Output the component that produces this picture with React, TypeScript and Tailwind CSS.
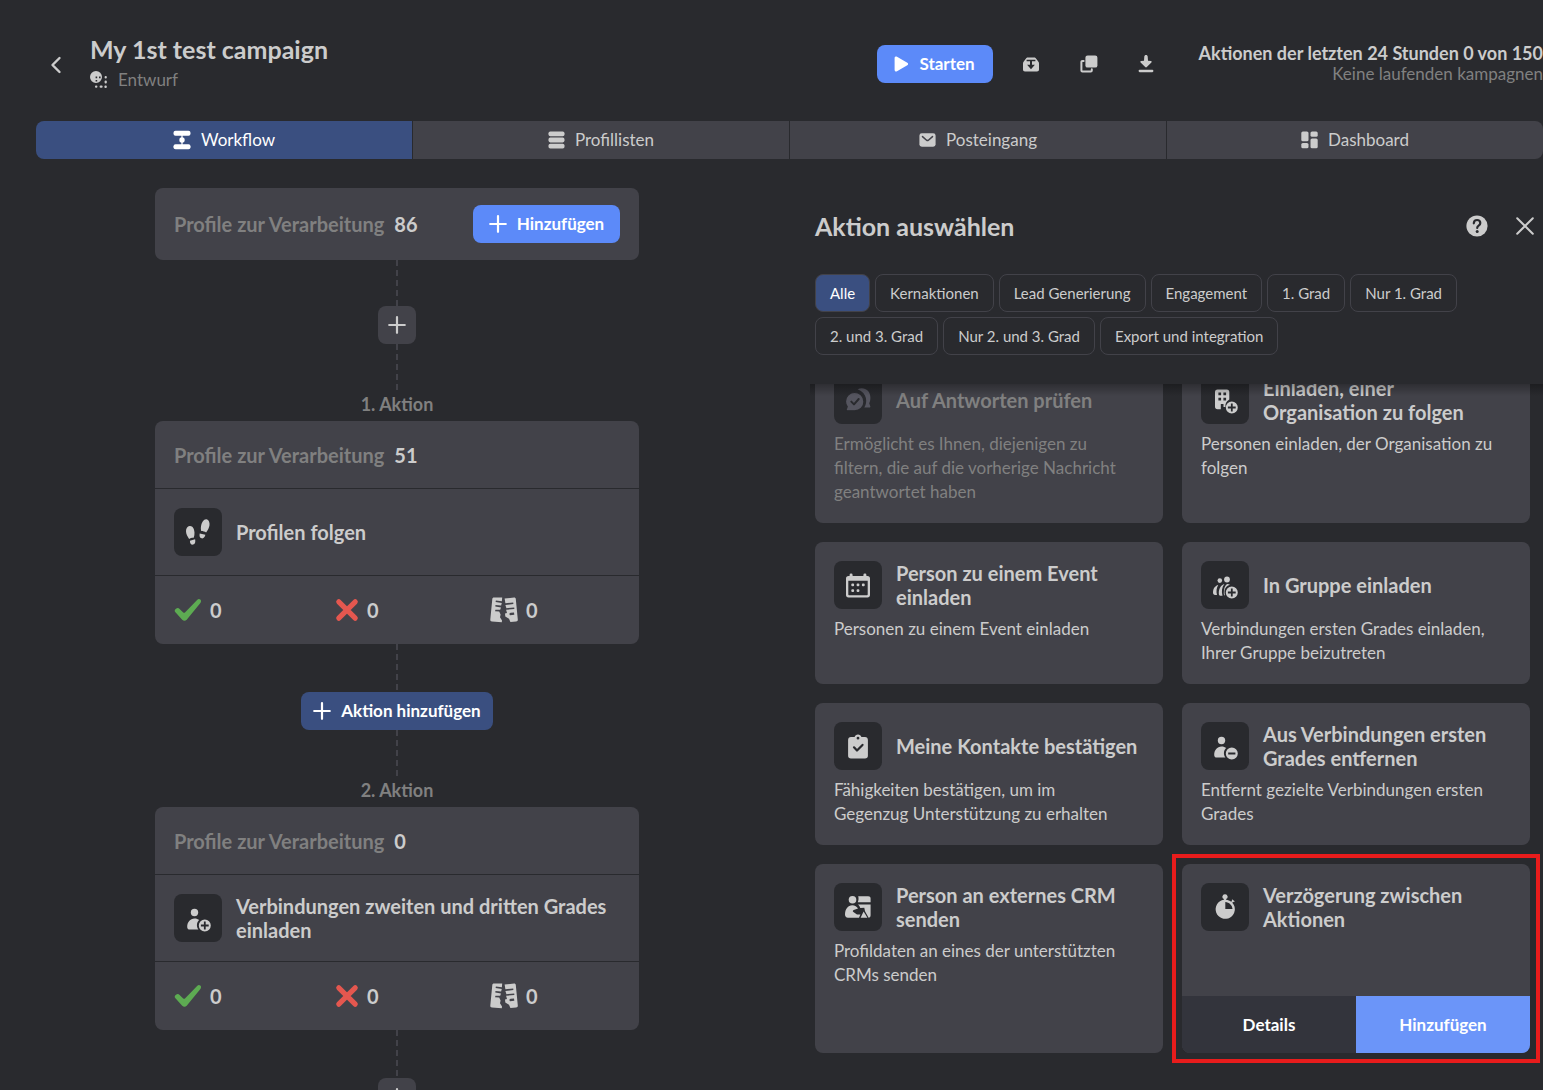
import React, { useState } from 'react';

type IconProps = { className?: string };

/* ---------- Icons ---------- */

const ChevronIcon = () => (
  <svg width="12" height="18" viewBox="0 0 12 18" fill="none" stroke="currentColor" strokeWidth="2.4" strokeLinecap="round" strokeLinejoin="round">
    <path d="M9.5 2 2.5 9l7 7" />
  </svg>
);

const DraftIcon = () => (
  <svg width="18" height="18" viewBox="0 0 18 18" fill="currentColor">
    <path fillRule="evenodd" d="M6 0a6 6 0 1 1 0 12A6 6 0 0 1 6 0Zm-.4 5.600v1.600h1.600V5.600Zm3.400 0v1.600h1.600V5.600Zm-3.400 3.400v1.600h1.600V9Z" />
    <rect x="14.6" y="5" width="2.2" height="2.4" rx="1" />
    <rect x="14.6" y="9.4" width="2.2" height="3" rx="1" />
    <rect x="14.4" y="14.4" width="2.4" height="2.6" rx="1" />
    <rect x="9.6" y="14.6" width="3" height="2.2" rx="1" />
    <rect x="5" y="14.6" width="2.4" height="2.2" rx="1" />
  </svg>
);

const PlayIcon = () => (
  <svg width="15" height="16" viewBox="0 0 15 16" fill="currentColor">
    <path d="M.6 1.9C.6.6 1.900 0 3 .7l10.300 6c1.100.7 1.100 2 0 2.600L3 15.300c-1.100.7-2.400.1-2.400-1.200Z" />
  </svg>
);

const ArchiveIcon = () => (
  <svg width="16" height="15" viewBox="0 0 16 15">
    <path fill="currentColor" d="M3.200 1.200C3.500.5 4 .4 4.600.4h6.800c.6 0 1.100.1 1.400.8L15.600 5c.3.500.4.900.4 1.500v6c0 1.300-.7 2-2 2H2c-1.300 0-2-.7-2-2v-6C0 5.900.1 5.500.4 5Z" />
    <path fill="#292a2e" d="M3.600 2.700h8.800v1.500H9v3.600h2.900L8 12.200 4.100 7.800H7V4.200H3.600Z" />
  </svg>
);

const CopyIcon = () => (
  <svg width="18" height="18" viewBox="0 0 18 18">
    <rect x="5.400" y=".6" width="12" height="12" rx="2.200" fill="currentColor" />
    <path fill="none" stroke="currentColor" strokeWidth="2" strokeLinecap="round" strokeLinejoin="round" d="M3.600 6H2.400C1.700 6 1.400 6.300 1.400 7v8.400c0 .7.300 1 1 1h8.400c.7 0 1-.3 1-1v-1.200" />
  </svg>
);

const DownloadIcon = () => (
  <svg width="16" height="18" viewBox="0 0 16 18" fill="currentColor">
    <path d="M8 0c1 0 1.600.6 1.700 1.600l.3 4.200 3 .3c.7.100.9.800.4 1.300L8.800 12c-.5.500-1.100.500-1.600 0L2.600 7.400c-.5-.5-.3-1.200.4-1.300l3-.3.300-4.200C6.400.6 7 0 8 0Z" />
    <rect x=".6" y="14.800" width="14.800" height="2.400" rx="1.100" />
  </svg>
);

const WorkflowIcon = () => (
  <svg width="18" height="20" viewBox="0 0 18 20" fill="currentColor">
    <rect x=".5" y=".8" width="17" height="5" rx="2" />
    <rect x=".5" y="14.200" width="17" height="5" rx="2" />
    <rect x="8.400" y="5" width="1.200" height="10" />
    <circle cx="9" cy="10" r="2.700" />
  </svg>
);

const ListIcon = () => (
  <svg width="17" height="18" viewBox="0 0 17 18" fill="currentColor">
    <rect x=".5" y=".4" width="16" height="4.800" rx="1.800" />
    <rect x=".5" y="6.600" width="16" height="4.800" rx="1.800" />
    <rect x=".5" y="12.800" width="16" height="4.800" rx="1.800" />
  </svg>
);

const MailIcon = () => (
  <svg width="17" height="14" viewBox="0 0 17 14">
    <rect x=".4" y=".3" width="16.200" height="13.400" rx="2.400" fill="currentColor" />
    <path d="M3.500 3.600 7.600 7.200c.6.500 1.200.5 1.800 0l4.100-3.600" fill="none" stroke="#424249" strokeWidth="1.500" strokeLinecap="round" />
  </svg>
);

const DashboardIcon = () => (
  <svg width="17" height="18" viewBox="0 0 17 18" fill="currentColor">
    <rect x=".3" y=".5" width="7.200" height="9.800" rx="1.600" />
    <rect x=".3" y="12" width="7.200" height="5.300" rx="1.600" />
    <rect x="9.500" y=".5" width="7.200" height="5.300" rx="1.600" />
    <rect x="9.500" y="7.500" width="7.200" height="9.800" rx="1.600" />
  </svg>
);

const PlusIcon = ({ className }: IconProps) => (
  <svg className={className} width="18" height="18" viewBox="0 0 18 18" fill="none" stroke="currentColor" strokeWidth="2.2" strokeLinecap="round">
    <path d="M9 1.200v15.600M1.200 9h15.600" />
  </svg>
);

const HelpIcon = () => (
  <svg width="22" height="22" viewBox="0 0 22 22">
    <circle cx="11" cy="11" r="10.600" fill="currentColor" />
    <path d="M7.800 8.300c.1-2 1.400-3.300 3.300-3.300 1.900 0 3.200 1.200 3.200 2.900 0 1.300-.7 2-1.700 2.800-1 .7-1.400 1.200-1.400 2.300" fill="none" stroke="#292a2e" strokeWidth="2.200" strokeLinecap="round" />
    <circle cx="11.200" cy="16.600" r="1.500" fill="#292a2e" />
  </svg>
);

const CloseIcon = () => (
  <svg width="18" height="18" viewBox="0 0 18 18" fill="none" stroke="currentColor" strokeWidth="2" strokeLinecap="round">
    <path d="m1.200 1.200 15.600 15.600M16.800 1.200 1.200 16.800" />
  </svg>
);

const CheckIcon = () => (
  <svg width="28" height="24" viewBox="0 0 28 24" fill="#5dab52">
    <path d="M2 10.800c1.200-1.100 2.600-.9 3.600.1l3.600 3.500c.7.600 1.300.6 2-.1L23.100 1.900c1.100-1.200 2.300-1.200 3.200-.4 1 .9 1 2.200.1 3.400L12.700 21.700c-1.300 1.500-3.200 1.500-4.500 0l-7-7.700c-.8-1-.6-2.300.8-3.200Z" />
  </svg>
);

const CrossIcon = () => (
  <svg width="24" height="24" viewBox="0 0 24 24" fill="none" stroke="#e4574f" strokeWidth="5.200" strokeLinecap="round">
    <path d="m3.800 3.800 16.400 16.400M20.200 3.800 3.800 20.200" />
  </svg>
);

const TornPageIcon = () => (
  <svg width="28" height="26" viewBox="0 0 28 26" fill="currentColor">
    <path d="M4 .6h8.200l-.3 3.600-6-.7-.3 1.400 6.200 1.200-.7 2.500-5.600-.6-.2 1.500 5.700.9-.8 2.400H5.400l-.3 1.500 4.100.3 1.400 2.800-.6 2.900 2 3.300-.2 1.700L2 24.600c-1.300-.1-1.800-.9-1.700-2L2.300 2.100C2.400 1.100 3 .6 4 .6Z" />
    <path fillRule="evenodd" d="M14.600 1.600 24.100.5c1 0 1.600.5 1.700 1.500l2 20.500c.1 1.300-.5 2-1.700 2l-5.700.5-1.400-3.200-3.700-2.200-.3-3 2-.7-.9-3.100 8.300-.9-.2-1.500-7.800.8-1-3.100 8-1.200-.2-1.500-7.800.8ZM20 18.300l4.300-.5-.3-2.300-3.400.3c-1.200.3-1.600 1.500-.6 2.500Z" />
  </svg>
);

const FootstepsIcon = () => (
  <svg width="28" height="28" viewBox="0 0 28 28" fill="currentColor">
    <path d="M5.600 8c2.900-.4 4.700 2.700 4.900 6.400.1 2-.2 3.700-.8 5.400-1.700-.1-3.400.3-4.600 1.100C3.500 18.700 2 16 2 13.300 2 10.500 3.300 8.300 5.600 8Z" />
    <path d="m5.900 22.700 5.200-1.500c.6 2.500 0 4.900-2 5.400-1.800.4-3.200-1.200-3.200-3.900Z" />
    <path d="M22.500 1.300c2.500.5 3.300 3.200 3 6-.3 2.500-1.700 5-3.400 7.100-1.300-.8-3.100-1.400-4.900-1.400-.4-1.700-.5-3.300-.1-5.200.8-3.700 2.700-6.900 5.400-6.500Z" />
    <path d="m15.700 15.400 5.700 1.400c-.6 2.500-1.900 4-3.800 3.500-1.900-.5-2.400-2.500-1.900-4.900Z" />
  </svg>
);

const PlusBadge = () => (
  <path fillRule="evenodd" d="M20.800 15.500a6 6 0 1 1 0 12 6 6 0 0 1 0-12Zm-.9 2.100v3h-3v1.800h3v3h1.800v-3h3v-1.800h-3v-3Z" />
);

const PersonPlusIcon = () => (
  <svg width="28" height="28" viewBox="0 0 28 28" fill="currentColor">
    <circle cx="10.500" cy="8.500" r="3.700" />
    <path d="M10.500 14.400c2 0 3.600.6 4.700 1.700-2.200 1.700-3.300 6-.8 9.500H6c-1.800 0-2.800-.9-2.800-2.600 0-5.100 3-8.600 7.300-8.600Z" />
    <PlusBadge />
  </svg>
);

const PersonMinusIcon = () => (
  <svg width="28" height="28" viewBox="0 0 28 28" fill="currentColor">
    <circle cx="10.500" cy="8.500" r="3.700" />
    <path d="M10.500 14.400c2 0 3.600.6 4.700 1.700-2.200 1.700-3.300 6-.8 9.500H6c-1.800 0-2.800-.9-2.800-2.600 0-5.100 3-8.600 7.300-8.600Z" />
    <path fillRule="evenodd" d="M20.800 15.500a6 6 0 1 1 0 12 6 6 0 0 1 0-12Zm-3.600 5v2h7.200v-2Z" />
  </svg>
);

const RepliesIcon = () => (
  <svg width="28" height="28" viewBox="0 0 28 28">
    <path fill="currentColor" d="M13.600 3.200c6.300-2.800 12.800 1 12.800 8.300 0 2.500-.4 4.200-1.200 5.800l1.100 2.900c.3.800-.2 1.300-1 1.300h-5c3.300-4.700 3.300-14.500-6.700-18.300Z" />
    <path fill="currentColor" stroke="#292a2e" strokeWidth="1.200" d="M10.600 6.500c5.300 0 9.300 4 9.300 9.300s-4 9-9.300 9H3.200c-.9 0-1.300-.7-.9-1.500l.9-2.600c-1.100-1.500-1.700-3.200-1.700-5.200 0-5 4-9 9.100-9Z" />
    <path d="m7.300 15.600 2.700 2.800 4.700-5.400" fill="none" stroke="#292a2e" strokeWidth="2" strokeLinecap="round" strokeLinejoin="round" />
  </svg>
);

const BuildingPlusIcon = () => (
  <svg width="28" height="28" viewBox="0 0 28 28" fill="currentColor">
    <path fillRule="evenodd" d="M6.500 3.400h9.300c1.600 0 2.500.9 2.500 2.500v7.700c-3 1.500-4.300 4.500-3.800 7.500h-2v-3.200H9.800v5.300H6.500c-1.600 0-2.500-.8-2.500-2.400V5.900c0-1.600.9-2.500 2.500-2.500Zm.9 3.200v2.700h2.700V6.600Zm5 0v2.700h2.700V6.600Zm-5 5.200v2.700h2.700v-2.700Zm5 0v2.700h2.700v-2.700Z" />
    <PlusBadge />
  </svg>
);

const CalendarIcon = () => (
  <svg width="28" height="28" viewBox="0 0 28 28" fill="currentColor">
    <rect x="5.600" y="2.600" width="3" height="5" rx="1.400" />
    <rect x="19.400" y="2.600" width="3" height="5" rx="1.400" />
    <path fillRule="evenodd" d="M4.500 4.900h19c1.600 0 2.500.9 2.500 2.500V24c0 1.600-.9 2.500-2.500 2.500h-19C2.900 26.500 2 25.600 2 24V7.400c0-1.600.9-2.500 2.500-2.500ZM4.300 9.800v13.400c0 .7.400 1.100 1.100 1.100h17.200c.7 0 1.100-.4 1.100-1.100V9.800Z" />
    <rect x="7.300" y="12.400" width="2.800" height="2.800" rx="1" />
    <rect x="12.600" y="12.400" width="2.800" height="2.800" rx="1" />
    <rect x="17.900" y="12.400" width="2.800" height="2.800" rx="1" />
    <rect x="7.300" y="18.200" width="2.800" height="2.800" rx="1" />
    <rect x="12.600" y="18.200" width="2.800" height="2.800" rx="1" />
  </svg>
);

const GroupPlusIcon = () => (
  <svg width="28" height="28" viewBox="0 0 28 28" fill="currentColor">
    <circle cx="8.800" cy="9.600" r="2.300" />
    <circle cx="16" cy="8.500" r="2.900" />
    <path d="M7.200 13.900C5.600 16.500 5 20.200 6 23.900H4.200c-1.500 0-2.200-.8-2.200-2.300 0-4.200 2.100-7 5.200-7.700Z" />
    <path d="M13.400 13.100c-2.500 3.200-3.100 7.500-1.900 11.600H10c-1.500 0-2.200-.7-2.200-2.300 0-4.900 2.300-8.300 5.600-9.300Z" />
    <path d="M16 13c1.300 0 2.200.2 3 .8-3.400.8-5.700 3.800-5.500 7.800 0 1 .2 2 .5 2.800-1-.2-1.200-1-1.200-2.500 0-4 1-7.300 3.200-8.900Z" />
    <PlusBadge />
  </svg>
);

const ClipboardIcon = () => (
  <svg width="28" height="28" viewBox="0 0 28 28">
    <path fill="currentColor" fillRule="evenodd" d="M14 2.600c1.700 0 2.900 1 3.400 2.500H21c1.800 0 2.900 1 2.900 2.900v15.700c0 1.800-1.100 2.800-2.900 2.800H7c-1.800 0-2.900-1-2.900-2.800V8c0-1.900 1.100-2.900 2.900-2.900h3.600c.5-1.500 1.700-2.500 3.400-2.500Zm0 2.200a1.400 1.400 0 1 0 0 2.800 1.400 1.400 0 0 0 0-2.800Z" />
    <path d="m10 15.300 3 3.200 5.500-5.600" fill="none" stroke="#292a2e" strokeWidth="2.200" strokeLinecap="round" strokeLinejoin="round" />
  </svg>
);

const CrmIcon = () => (
  <svg width="28" height="28" viewBox="0 0 28 28" fill="currentColor">
    <circle cx="8.500" cy="6.800" r="3.800" />
    <path d="M14.200 3.200h10c1.500 0 2.400.8 2.400 2.400v3.600H13.800c.8-1.900 1-3.900.4-6Z" />
    <path d="M14 11.400h12.600v10.900c0 1.500-.7 2.400-2 2.400L21 18.300l-.7-3.500-4 .2c-.5-1.500-1.200-2.600-2.300-3.600Z" />
    <path d="M8.300 12.200c2.600 0 4.600 1.300 5.700 3.400l-4.300 1.500c-1 .4-1.200 1.300-.3 1.900l3.600 2.400h3.400l-1.400 3.300H4c-2 0-3-1-3-3.100 0-5.500 2.900-9.400 7.300-9.400Z" />
    <path d="m19.600 18.400 3.800 6.300h-6.800Z" />
  </svg>
);

const StopwatchIcon = () => (
  <svg width="28" height="28" viewBox="0 0 28 28">
    <path fill="currentColor" d="M14 1.200a2.500 2.500 0 0 1 1.100 4.800v.7c1.900.2 3.600.9 5.100 2l.9-1-.3-.5c-.2-.5.5-1 1-.5l1.500 1.400c.5.500-.1 1.200-.6 1l-.5-.3-.9.900a9.600 9.600 0 1 1-8.400-3V6A2.500 2.500 0 0 1 14 1.200Z" />
    <path fill="#292a2e" d="M14.300 8.900c3.900.2 6.900 3.200 7.200 7.100h-7.200Z" />
  </svg>
);

/* ---------- Data ---------- */

const tabs = [
  { label: 'Workflow', icon: WorkflowIcon },
  { label: 'Profillisten', icon: ListIcon },
  { label: 'Posteingang', icon: MailIcon },
  { label: 'Dashboard', icon: DashboardIcon },
];

const filters = [
  'Alle',
  'Kernaktionen',
  'Lead Generierung',
  'Engagement',
  '1. Grad',
  'Nur 1. Grad',
  '2. und 3. Grad',
  'Nur 2. und 3. Grad',
  'Export und integration',
];

const actions = [
  { title: 'Auf Antworten prüfen', text: 'Ermöglicht es Ihnen, diejenigen zu filtern, die auf die vorherige Nachricht geantwortet haben', icon: RepliesIcon, disabled: true },
  { title: 'Einladen, einer Organisation zu folgen', text: 'Personen einladen, der Organisation zu folgen', icon: BuildingPlusIcon },
  { title: 'Person zu einem Event einladen', text: 'Personen zu einem Event einladen', icon: CalendarIcon },
  { title: 'In Gruppe einladen', text: 'Verbindungen ersten Grades einladen, Ihrer Gruppe beizutreten', icon: GroupPlusIcon },
  { title: 'Meine Kontakte bestätigen', text: 'Fähigkeiten bestätigen, um im Gegenzug Unterstützung zu erhalten', icon: ClipboardIcon },
  { title: 'Aus Verbindungen ersten Grades entfernen', text: 'Entfernt gezielte Verbindungen ersten Grades', icon: PersonMinusIcon },
  { title: 'Person an externes CRM senden', text: 'Profildaten an eines der unterstützten CRMs senden', icon: CrmIcon },
];

/* ---------- Workflow column ---------- */

const Connector = ({ className }: IconProps) => (
  <div className={`w-[2px] shrink-0 bg-[repeating-linear-gradient(to_bottom,#424249_0px,#424249_6px,transparent_6px,transparent_10px)] ${className}`} />
);

const AddStepButton = () => (
  <button type="button" aria-label="Schritt hinzufügen" className="w-[38px] h-[38px] shrink-0 rounded-lg bg-[#424249] flex items-center justify-center">
    <PlusIcon />
  </button>
);

const QueueLabel = ({ count }: { count: number }) => (
  <p className="flex gap-[10px] text-[20px] leading-6 font-bold text-[#808080]">
    Profile zur Verarbeitung <span className="text-[#cccccc]">{count}</span>
  </p>
);

const StepCard = ({ count, title, icon: Icon }: { count: number; title: string; icon: React.FC }) => (
  <section className="w-full shrink-0 bg-[#424249] rounded-lg divide-y divide-[#292a2e]">
    <div className="h-[68px] px-[19px] flex items-center">
      <QueueLabel count={count} />
    </div>
    <div className="h-[87px] px-[19px] flex items-center gap-[14px]">
      <div className="w-12 h-12 shrink-0 rounded-lg bg-[#292a2e] flex items-center justify-center">
        <Icon />
      </div>
      <h3 className="text-[20px] leading-6 font-bold">{title}</h3>
    </div>
    <div className="h-[68px] px-[19px] grid grid-cols-[161px_155px_1fr] items-center text-[20px] leading-6 font-bold">
      <span className="flex items-center gap-2"><CheckIcon />0</span>
      <span className="flex items-center gap-2"><CrossIcon />0</span>
      <span className="flex items-center gap-2"><TornPageIcon />0</span>
    </div>
  </section>
);

const StepTitle = ({ children }: { children: React.ReactNode }) => (
  <h2 className="h-[31px] shrink-0 pt-1 text-[18px] leading-5 font-bold text-[#808080]">{children}</h2>
);

/* ---------- Action picker ---------- */

const ActionHead = ({ title, icon: Icon, disabled }: { title: string; icon: React.FC; disabled?: boolean }) => (
  <div className="flex items-center gap-[14px]">
    <div className={`w-12 h-12 shrink-0 rounded-lg bg-[#292a2e] flex items-center justify-center ${disabled ? 'text-[#55555f]' : ''}`}>
      <Icon />
    </div>
    <h3 className="text-[20px] leading-6 font-bold">{title}</h3>
  </div>
);

const App = () => {
  const [tab, setTab] = useState('Workflow');
  const [filter, setFilter] = useState('Alle');

  return (
    <div className="h-screen overflow-hidden flex flex-col bg-[#292a2e] text-[#cccccc] font-['Lato',sans-serif]">
      <header className="h-[121px] shrink-0 pl-[50px] flex items-start">
        <button type="button" aria-label="Zurück" className="mt-14">
          <ChevronIcon />
        </button>
        <div className="ml-7 mt-[33px]">
          <h1 className="text-[25px] leading-8 font-bold">My 1st test campaign</h1>
          <p className="mt-[5px] flex items-center gap-[10px] text-[17px] leading-5 text-[#808080]">
            <span className="text-[#cccccc]"><DraftIcon /></span>
            Entwurf
          </p>
        </div>
        <div className="ml-auto mt-[45px] h-[38px] flex items-center">
          <button type="button" className="h-[38px] w-[116px] rounded-lg bg-[#5c8af9] text-white font-bold text-[17px] flex items-center justify-center gap-[10px]">
            <PlayIcon /> Starten
          </button>
          <button type="button" aria-label="Archivieren" className="ml-[30px]"><ArchiveIcon /></button>
          <button type="button" aria-label="Kopieren" className="ml-[41px]"><CopyIcon /></button>
          <button type="button" aria-label="Herunterladen" className="ml-10"><DownloadIcon /></button>
        </div>
        <div className="ml-[45px] mt-[43px] text-right">
          <p className="text-[18px] leading-5 font-bold">Aktionen der letzten 24 Stunden 0 von 150</p>
          <p className="mt-px text-[17px] leading-5 text-[#808080]">Keine laufenden kampagnen</p>
        </div>
      </header>

      <nav className="ml-9 shrink-0 grid grid-cols-4 gap-px rounded-lg overflow-hidden">
        {tabs.map(({ label, icon: Icon }) => (
          <button
            key={label}
            type="button"
            onClick={() => setTab(label)}
            className={`h-[38px] flex items-center justify-center gap-[10px] text-[17px] ${tab === label ? 'bg-[#3a4f80] text-white' : 'bg-[#424249]'}`}
          >
            <Icon /> {label}
          </button>
        ))}
      </nav>

      <div className="flex-1 min-h-0 grid grid-cols-[53fr_50fr]">
        <main className="min-h-0 overflow-hidden pt-[29px]">
          <div className="w-[484px] mx-auto flex flex-col items-center">
            <section className="w-full h-[72px] shrink-0 px-[19px] rounded-lg bg-[#424249] flex items-center justify-between">
              <QueueLabel count={86} />
              <button type="button" className="h-[38px] w-[147px] rounded-lg bg-[#5c8af9] text-white font-bold text-[17px] flex items-center justify-center gap-[10px]">
                <PlusIcon /> Hinzufügen
              </button>
            </section>
            <Connector className="h-[46px]" />
            <AddStepButton />
            <Connector className="h-[46px]" />

            <StepTitle>1. Aktion</StepTitle>
            <StepCard count={51} title="Profilen folgen" icon={FootstepsIcon} />
            <Connector className="h-[48px]" />
            <button type="button" className="h-[38px] w-[192px] shrink-0 rounded-lg bg-[#3a4f80] text-white font-bold text-[17px] flex items-center justify-center gap-[10px]">
              <PlusIcon /> Aktion hinzufügen
            </button>
            <Connector className="h-[46px]" />

            <StepTitle>2. Aktion</StepTitle>
            <StepCard count={0} title="Verbindungen zweiten und dritten Grades einladen" icon={PersonPlusIcon} />
            <Connector className="h-[48px]" />
            <AddStepButton />
          </div>
        </main>

        <aside className="min-h-0 flex flex-col">
          <div className="h-[225px] shrink-0 pl-[21px] pr-[9px]">
            <div className="pt-[51px] flex items-center">
              <h2 className="text-[25px] leading-8 font-bold">Aktion auswählen</h2>
              <button type="button" aria-label="Hilfe" className="ml-auto"><HelpIcon /></button>
              <button type="button" aria-label="Schließen" className="ml-7"><CloseIcon /></button>
            </div>
            <div className="mt-8 flex flex-wrap gap-[5px]">
              {filters.map(name => (
                <button
                  key={name}
                  type="button"
                  onClick={() => setFilter(name)}
                  className={`h-[38px] px-[14px] rounded-lg border border-[#424249] text-[15px] ${filter === name ? 'bg-[#3a4f80] text-white' : ''}`}
                >
                  {name}
                </button>
              ))}
            </div>
          </div>

          <div className="relative flex-1 min-h-0 overflow-hidden pl-[21px] pr-[13px]">
            <div className="absolute left-4 right-0 top-0 z-10 h-3 bg-linear-to-b from-black/30 to-transparent" />
            <div className="-mt-[27px] grid grid-cols-2 gap-[19px]">
              {actions.map(({ title, text, icon, disabled }) => (
                <article key={title} className={`p-[19px] rounded-lg bg-[#424249] ${disabled ? 'text-[#808080]' : ''}`}>
                  <ActionHead title={title} icon={icon} disabled={disabled} />
                  <p className="mt-2 pr-3 text-[17px] leading-6">{text}</p>
                </article>
              ))}
              <article className="relative min-h-[189px] rounded-lg bg-[#424249] flex flex-col">
                <div className="p-[19px]">
                  <ActionHead title="Verzögerung zwischen Aktionen" icon={StopwatchIcon} />
                </div>
                <div className="mt-auto h-[57px] grid grid-cols-2 rounded-b-lg overflow-hidden text-white text-[17px] font-bold">
                  <button type="button" className="bg-[#33343c]">Details</button>
                  <button type="button" className="bg-[#6b95f9]">Hinzufügen</button>
                </div>
                <div className="absolute -inset-[10px] border-4 border-[#e81c1c] pointer-events-none" />
              </article>
            </div>
          </div>
        </aside>
      </div>
    </div>
  );
};

export default App;
